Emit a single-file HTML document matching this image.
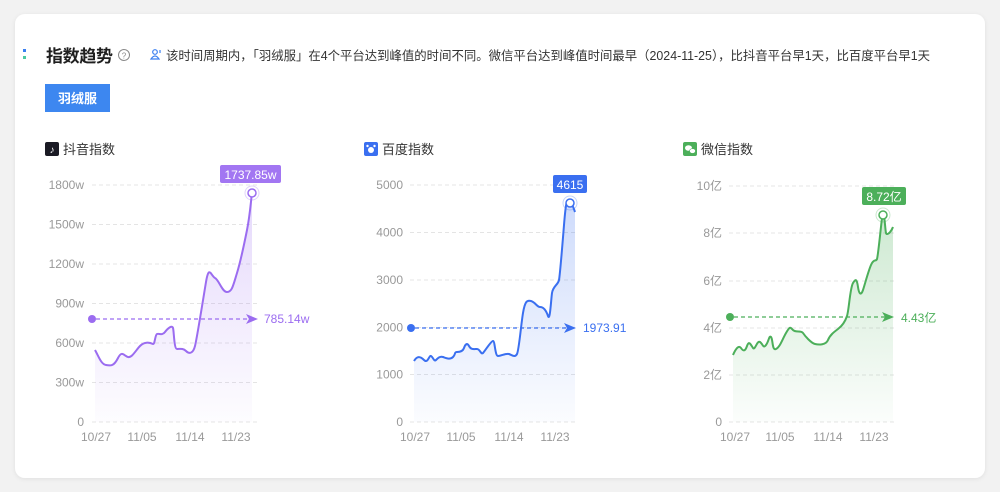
<!DOCTYPE html>
<html><head><meta charset="utf-8"><style>
html,body{margin:0;padding:0;background:#f2f2f2;width:1000px;height:492px;overflow:hidden}
svg{display:block}
text{font-family:"Liberation Sans","Noto Sans CJK SC",sans-serif}
</style></head><body>
<svg width="1000" height="492" viewBox="0 0 1000 492" xmlns="http://www.w3.org/2000/svg">
<defs>
<linearGradient id="gp" x1="0" y1="0" x2="0" y2="1"><stop offset="0" stop-color="#a276f2" stop-opacity="0.28"/><stop offset="1" stop-color="#a276f2" stop-opacity="0.02"/></linearGradient>
<linearGradient id="gb" x1="0" y1="0" x2="0" y2="1"><stop offset="0" stop-color="#3a6ff0" stop-opacity="0.25"/><stop offset="1" stop-color="#3a6ff0" stop-opacity="0.02"/></linearGradient>
<linearGradient id="gg" x1="0" y1="0" x2="0" y2="1"><stop offset="0" stop-color="#4caf5a" stop-opacity="0.28"/><stop offset="1" stop-color="#4caf5a" stop-opacity="0.02"/></linearGradient>
<filter id="sh" x="-5%" y="-5%" width="110%" height="110%"><feDropShadow dx="0" dy="1" stdDeviation="2" flood-color="#000" flood-opacity="0.08"/></filter>
</defs>
<rect x="15" y="14" width="970" height="464" rx="10" fill="#fff" filter="url(#sh)"/>
<!-- header -->
<rect x="23" y="49" width="3" height="3" fill="#3a7ff0"/><rect x="23" y="56" width="3" height="3" fill="#4cc9a0"/>
<text x="46" y="62" font-size="17" font-weight="bold" fill="#1f1f1f" textLength="67">指数趋势</text>
<circle cx="124" cy="55" r="5.5" fill="none" stroke="#888" stroke-width="1"/><text x="124" y="58.5" font-size="8" fill="#888" text-anchor="middle">?</text>
<circle cx="155" cy="52" r="2.3" fill="none" stroke="#3a7ff0" stroke-width="1.2"/><path d="M151 59 q4 -6 8 0 z" fill="none" stroke="#3a7ff0" stroke-width="1.2"/><path d="M160 50 v3" stroke="#3a7ff0" stroke-width="1.2"/>
<text x="166" y="60" font-size="12.5" fill="#333" textLength="764" lengthAdjust="spacingAndGlyphs">该时间周期内，「羽绒服」在4个平台达到峰值的时间不同。微信平台达到峰值时间最早（2024-11-25），比抖音平台早1天，比百度平台早1天</text>
<rect x="45" y="84" width="65" height="28" fill="#3d87f0"/>
<text x="77.5" y="103" font-size="13" fill="#fff" text-anchor="middle" font-weight="bold">羽绒服</text>

<!-- chart titles -->
<rect x="45" y="142" width="14" height="14" rx="2" fill="#1a1a24"/><text x="52" y="153" font-size="10" fill="#fff" text-anchor="middle">♪</text>
<text x="63" y="154" font-size="13" fill="#333">抖音指数</text>
<rect x="364" y="142" width="14" height="14" rx="2" fill="#3a6ff0"/><circle cx="371" cy="150" r="3" fill="#fff"/><circle cx="367.5" cy="146" r="1.2" fill="#fff"/><circle cx="374.5" cy="146" r="1.2" fill="#fff"/>
<text x="382" y="154" font-size="13" fill="#333">百度指数</text>
<rect x="683" y="142" width="14" height="14" rx="2" fill="#4caf5a"/><ellipse cx="688.5" cy="148" rx="3.5" ry="2.8" fill="#fff"/><ellipse cx="692.5" cy="151" rx="3" ry="2.4" fill="#fff" stroke="#4caf5a" stroke-width="0.6"/>
<text x="701" y="154" font-size="13" fill="#333">微信指数</text>

<g font-size="12" fill="#999" text-anchor="end">
<g stroke="#e4e4e4" stroke-dasharray="4 3" stroke-width="1">
<path d="M92 185H258M92 224.5H258M92 264H258M92 303.5H258M92 343H258M92 382.5H258M92 422H258"/>
<path d="M410 185H576M410 232.5H576M410 280H576M410 327.5H576M410 374.5H576M410 422H576"/>
<path d="M729 186H895M729 233H895M729 281H895M729 328H895M729 375H895M729 422H895"/>
</g>
<text x="84" y="189">1800w</text><text x="84" y="228.5">1500w</text><text x="84" y="268">1200w</text><text x="84" y="307.5">900w</text><text x="84" y="347">600w</text><text x="84" y="386.5">300w</text><text x="84" y="426">0</text>
<text x="403" y="189">5000</text><text x="403" y="236.5">4000</text><text x="403" y="284">3000</text><text x="403" y="331.5">2000</text><text x="403" y="378.5">1000</text><text x="403" y="426">0</text>
<text x="722" y="190">10亿</text><text x="722" y="237">8亿</text><text x="722" y="285">6亿</text><text x="722" y="332">4亿</text><text x="722" y="379">2亿</text><text x="722" y="426">0</text>
</g>
<g font-size="12" fill="#999" text-anchor="middle">
<text x="96" y="441">10/27</text><text x="142" y="441">11/05</text><text x="190" y="441">11/14</text><text x="236" y="441">11/23</text>
<text x="415" y="441">10/27</text><text x="461" y="441">11/05</text><text x="509" y="441">11/14</text><text x="555" y="441">11/23</text>
<text x="735" y="441">10/27</text><text x="780" y="441">11/05</text><text x="828" y="441">11/14</text><text x="874" y="441">11/23</text>
</g>

<!-- chart1 -->
<path d="M95 350 C99 357,101 364,106 365 S114 366,118 358 S124 356,128 357 S136 350,140 346 S149 342,153 344 C155 344,155 335,157 334 S162 336,165 332 S172 325,173 328 S174 349,177 349 S183 348,186 351 S193 354,195 346 S203 300,206 282 S211 276,215 278 S222 292,227 292 S233 286,237 273 S244 245,247 230 S251 200,252 193 L252 422 L95 422 Z" fill="url(#gp)"/>
<path d="M95 350 C99 357,101 364,106 365 S114 366,118 358 S124 356,128 357 S136 350,140 346 S149 342,153 344 C155 344,155 335,157 334 S162 336,165 332 S172 325,173 328 S174 349,177 349 S183 348,186 351 S193 354,195 346 S203 300,206 282 S211 276,215 278 S222 292,227 292 S233 286,237 273 S244 245,247 230 S251 200,252 193" fill="none" stroke="#9b6cf0" stroke-width="2"/>
<circle cx="92" cy="319" r="4" fill="#9b6cf0"/>
<path d="M96 319H252" stroke="#9b6cf0" stroke-dasharray="4 3" stroke-width="1.2"/>
<path d="M246 314 L258 319 L246 324 L249 319 Z" fill="#9b6cf0"/>
<text x="264" y="323" font-size="12" fill="#9b6cf0">785.14w</text>
<circle cx="252" cy="193" r="7" fill="none" stroke="#9b6cf0" stroke-opacity="0.3"/><circle cx="252" cy="193" r="4" fill="#fff" stroke="#9b6cf0" stroke-width="1.5"/>
<rect x="220" y="165" width="61" height="18" rx="2" fill="#a276f2"/><text x="250.5" y="179" font-size="12" fill="#fff" text-anchor="middle">1737.85w</text>

<!-- chart2 -->
<path d="M414 361 C417 356,420 356,424 360 S429 355,431 356 S434 362,436 360 S440 356,443 357 S450 360,453 357 S454 352,457 352 S463 351,464 348 S467 342,469 346 S474 349,477 349 S481 355,483 353 S491 341,493 341 S495 356,498 356 S506 353,509 354 S515 358,517 354 S521 325,523 313 S527 300,531 301 S537 307,540 307 S546 310,548 316 S551 300,552 293 S558 285,559 280 S562 250,564 225 S567 200,569 201 S573 206,575 212 L575 422 L414 422 Z" fill="url(#gb)"/>
<path d="M414 361 C417 356,420 356,424 360 S429 355,431 356 S434 362,436 360 S440 356,443 357 S450 360,453 357 S454 352,457 352 S463 351,464 348 S467 342,469 346 S474 349,477 349 S481 355,483 353 S491 341,493 341 S495 356,498 356 S506 353,509 354 S515 358,517 354 S521 325,523 313 S527 300,531 301 S537 307,540 307 S546 310,548 316 S551 300,552 293 S558 285,559 280 S562 250,564 225 S567 200,569 201 S573 206,575 212" fill="none" stroke="#3a6ff0" stroke-width="2"/>
<circle cx="411" cy="328" r="4" fill="#3a6ff0"/>
<path d="M415 328H570" stroke="#3a6ff0" stroke-dasharray="4 3" stroke-width="1.2"/>
<path d="M564 323 L576 328 L564 333 L567 328 Z" fill="#3a6ff0"/>
<text x="583" y="332" font-size="12" fill="#3a6ff0">1973.91</text>
<circle cx="570" cy="203" r="7" fill="none" stroke="#3a6ff0" stroke-opacity="0.3"/><circle cx="570" cy="203" r="4" fill="#fff" stroke="#3a6ff0" stroke-width="1.5"/>
<rect x="553" y="175" width="34" height="18" rx="2" fill="#3a6ff0"/><text x="570" y="189" font-size="12" fill="#fff" text-anchor="middle">4615</text>

<!-- chart3 -->
<path d="M733 355 C736 348,739 345,741 348 S745 352,747 346 S751 345,753 348 S757 340,760 342 S763 349,766 345 S769 335,771 337 S772 351,776 349 S782 340,786 333 S790 327,793 330 S801 330,803 333 S811 343,815 344 S826 345,828 340 S834 332,838 329 S845 322,847 316 S850 288,853 283 S857 280,858 287 S861 296,863 290 S868 272,871 265 S876 262,877 259 S880 235,882 218 S885 230,886 233 S891 232,893 227 L893 422 L733 422 Z" fill="url(#gg)"/>
<path d="M733 355 C736 348,739 345,741 348 S745 352,747 346 S751 345,753 348 S757 340,760 342 S763 349,766 345 S769 335,771 337 S772 351,776 349 S782 340,786 333 S790 327,793 330 S801 330,803 333 S811 343,815 344 S826 345,828 340 S834 332,838 329 S845 322,847 316 S850 288,853 283 S857 280,858 287 S861 296,863 290 S868 272,871 265 S876 262,877 259 S880 235,882 218 S885 230,886 233 S891 232,893 227" fill="none" stroke="#4caf5a" stroke-width="2"/>
<circle cx="730" cy="317" r="4" fill="#4caf5a"/>
<path d="M734 317H888" stroke="#4caf5a" stroke-dasharray="4 3" stroke-width="1.2"/>
<path d="M882 312 L894 317 L882 322 L885 317 Z" fill="#4caf5a"/>
<text x="901" y="322" font-size="12" fill="#4caf5a">4.43亿</text>
<circle cx="883" cy="215" r="7" fill="none" stroke="#4caf5a" stroke-opacity="0.3"/><circle cx="883" cy="215" r="4" fill="#fff" stroke="#4caf5a" stroke-width="1.5"/>
<rect x="862" y="187" width="44" height="18" rx="2" fill="#4caf5a"/><text x="884" y="201" font-size="12" fill="#fff" text-anchor="middle">8.72亿</text>
</svg>
</body></html>
